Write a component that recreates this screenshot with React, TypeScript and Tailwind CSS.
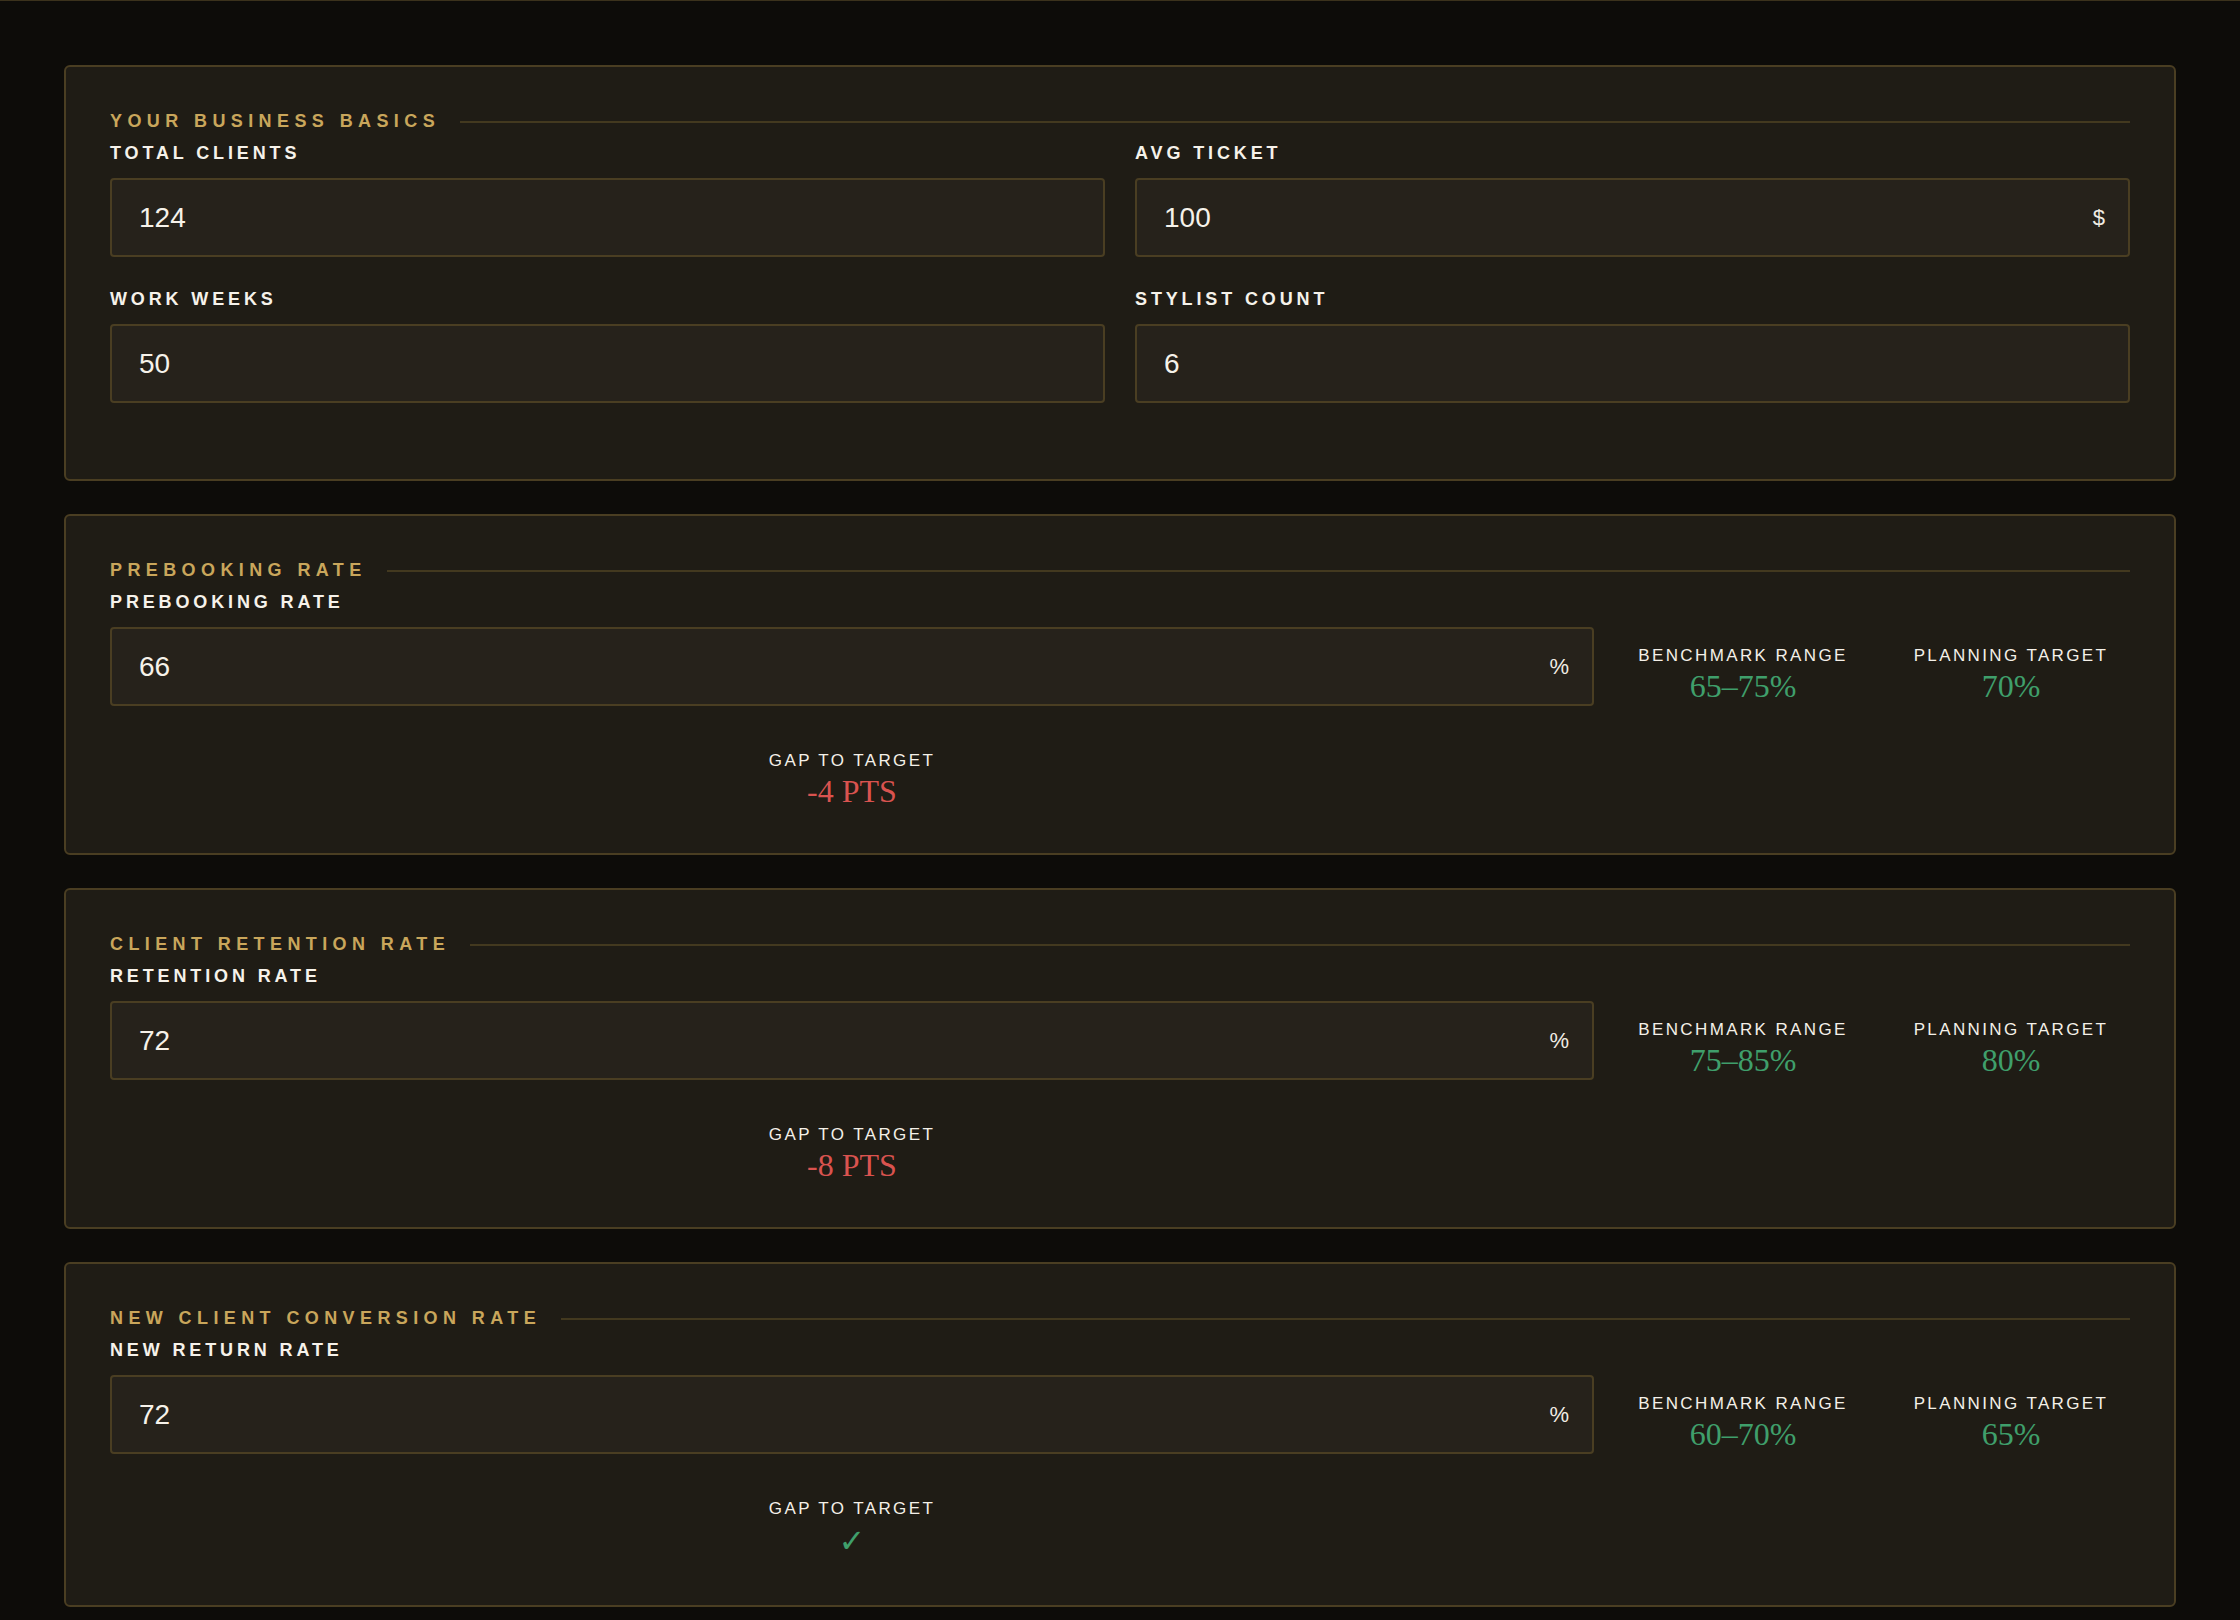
import React from "react";

type Metric = {
  title: string;
  label: string;
  value: string;
  range: string;
  target: string;
  gap: string | null;
};

const metrics: Metric[] = [
  {
    title: "PREBOOKING RATE",
    label: "PREBOOKING RATE",
    value: "66",
    range: "65–75%",
    target: "70%",
    gap: "-4 PTS",
  },
  {
    title: "CLIENT RETENTION RATE",
    label: "RETENTION RATE",
    value: "72",
    range: "75–85%",
    target: "80%",
    gap: "-8 PTS",
  },
  {
    title: "NEW CLIENT CONVERSION RATE",
    label: "NEW RETURN RATE",
    value: "72",
    range: "60–70%",
    target: "65%",
    gap: null,
  },
];

const SectionTitle = ({ children }: { children: React.ReactNode }) => (
  <div className="flex items-center gap-[20px] mb-[11px]">
    <span className="text-[18px] leading-[21px] font-bold tracking-[0.3em] text-[#c9a65b]">
      {children}
    </span>
    <div className="flex-1 h-[2px] bg-[#43391f]" />
  </div>
);

const Label = ({ children }: { children: React.ReactNode }) => (
  <div className="text-[18px] leading-[21px] font-bold tracking-[0.215em] text-[#f6f2ea] mb-[14px]">
    {children}
  </div>
);

const Field = ({ value, suffix }: { value: string; suffix?: string }) => (
  <div className="flex items-center h-[79px] rounded-[4px] border-2 border-[#4a3e22] bg-[#26221b] pl-[27px] pr-[23px]">
    <input
      defaultValue={value}
      className="flex-1 min-w-0 bg-transparent outline-none text-[28px] text-[#f6f2ea] font-['Liberation_Sans',Arial,sans-serif]"
    />
    {suffix && <span className="text-[22px] text-[#f0ece4]">{suffix}</span>}
  </div>
);

const StatLabel = ({ children }: { children: React.ReactNode }) => (
  <span className="text-[17px] leading-[20px] tracking-[0.14em] text-[#f4f0e8] mb-[2px]">
    {children}
  </span>
);

const Stat = ({
  label,
  value,
  tone = "green",
}: {
  label: string;
  value: string;
  tone?: "green" | "red";
}) => (
  <div className="flex flex-col items-center">
    <StatLabel>{label}</StatLabel>
    <span
      className={
        "font-['Liberation_Serif','DejaVu_Serif',serif] text-[32px] leading-[36px] " +
        (tone === "red" ? "text-[#d9534f]" : "text-[#3f9f6b]")
      }
    >
      {value}
    </span>
  </div>
);

const Card = ({ children }: { children: React.ReactNode }) => (
  <section className="rounded-[6px] border-2 border-[#4a3e22] bg-[#1f1c15] px-[44px] pt-[44px] pb-[44px]">
    {children}
  </section>
);

export default function App() {
  return (
    <div className="min-h-screen bg-[#0d0c09] border-t border-[#3b321c] px-[64px] pt-[64px] pb-[64px] flex flex-col gap-[33px] font-['Liberation_Sans',Arial,sans-serif]">
      <Card>
        <SectionTitle>YOUR BUSINESS BASICS</SectionTitle>
        <div className="grid grid-cols-2 gap-x-[30px]">
          <div className="mb-[32px]">
            <Label>TOTAL CLIENTS</Label>
            <Field value="124" />
          </div>
          <div className="mb-[32px]">
            <Label>AVG TICKET</Label>
            <Field value="100" suffix="$" />
          </div>
          <div className="mb-[32px]">
            <Label>WORK WEEKS</Label>
            <Field value="50" />
          </div>
          <div className="mb-[32px]">
            <Label>STYLIST COUNT</Label>
            <Field value="6" />
          </div>
        </div>
      </Card>

      {metrics.map((m) => (
        <Card key={m.title}>
          <SectionTitle>{m.title}</SectionTitle>
          <div className="grid grid-cols-[1fr_238px_238px] gap-x-[30px] items-end">
            <div>
              <Label>{m.label}</Label>
              <Field value={m.value} suffix="%" />
            </div>
            <div className="pb-[2px]">
              <Stat label="BENCHMARK RANGE" value={m.range} />
            </div>
            <div className="pb-[2px]">
              <Stat label="PLANNING TARGET" value={m.target} />
            </div>
            <div className="col-start-1 mt-[45px] flex flex-col items-center">
              {m.gap ? (
                <Stat label="GAP TO TARGET" value={m.gap} tone="red" />
              ) : (
                <div className="flex flex-col items-center">
                  <StatLabel>GAP TO TARGET</StatLabel>
                  <span className="font-['DejaVu_Sans',sans-serif] text-[32px] leading-[40px] text-[#3f9f6b]">
                    ✓
                  </span>
                </div>
              )}
            </div>
          </div>
        </Card>
      ))}
    </div>
  );
}
